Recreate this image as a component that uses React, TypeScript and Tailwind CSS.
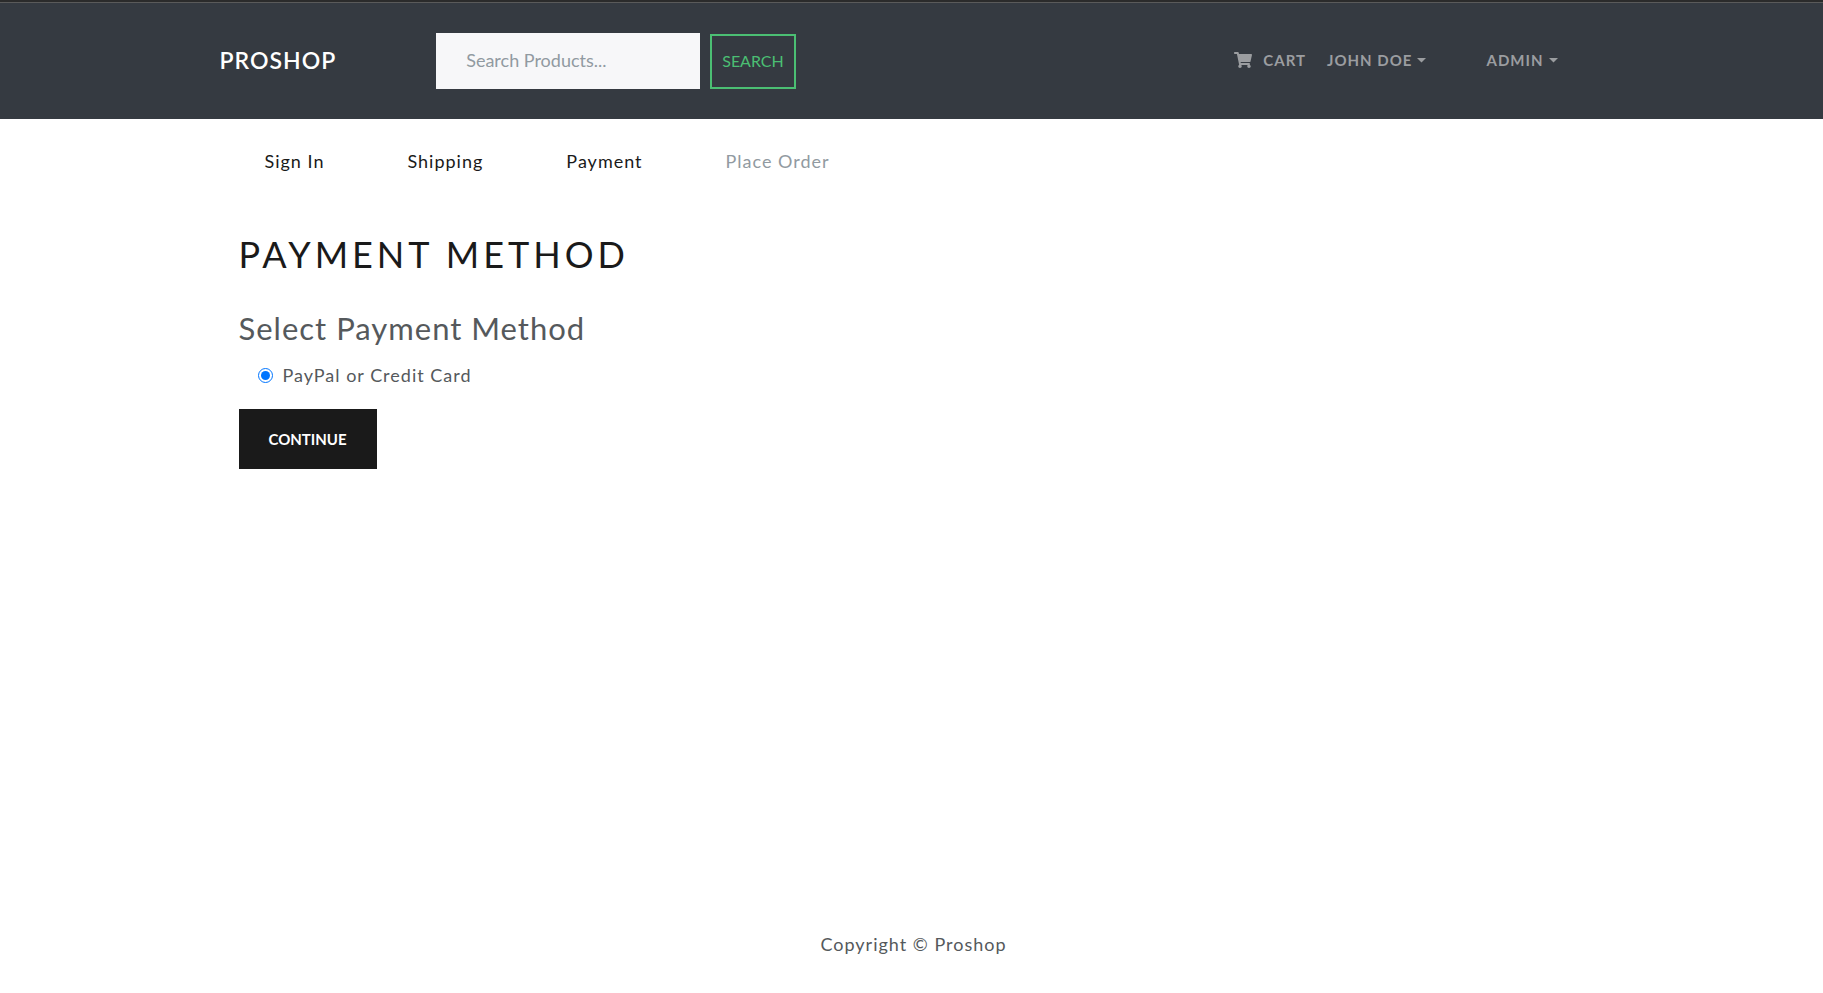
import { FaShoppingCart } from 'react-icons/fa';

const steps = [
  { label: 'Sign In', done: true },
  { label: 'Shipping', done: true },
  { label: 'Payment', done: true },
  { label: 'Place Order', done: false },
];

function Caret() {
  return (
    <svg viewBox="0 0 9 5" className="h-[5px] w-[9px] fill-current" aria-hidden="true">
      <path d="M0 0h9L4.5 4.5z" />
    </svg>
  );
}

function Header() {
  return (
    <header className="border-t-2 border-[#2b2b2b] bg-[#353a41]">
      <div className="border-t border-[#5a5a5a]">
        <nav className="mx-auto flex h-[116px] max-w-[1384px] items-center">
          <a href="#home" className="pb-[2px] text-[23px] font-semibold tracking-[1px] text-white">PROSHOP</a>
          <form className="ml-[100px] flex items-center gap-[10px]" onSubmit={(e) => e.preventDefault()}>
            <input
              type="text"
              aria-label="Search products"
              placeholder="Search Products..."
              className="h-14 w-[264px] bg-[#f7f7f9] px-[30px] pb-[2px] text-[18px] tracking-normal text-[#55595c] outline-none placeholder:text-[#919aa1]"
            />
            <button type="submit" className="mt-px h-[55px] border-2 border-[#4bbf73] px-[10px] pb-[2px] text-[16px] tracking-normal text-[#4bbf73]">
              SEARCH
            </button>
          </form>
          <div className="ml-auto flex items-center pr-[46px] pb-[2px] text-[15px] font-bold tracking-[1px] text-[#9b9da0]">
            <a href="#cart" className="flex items-center gap-[11px]">
              <FaShoppingCart className="size-[18px]" />
              CART
            </a>
            <button type="button" className="ml-[21px] flex items-center gap-[5px] tracking-[1px]">JOHN DOE<Caret /></button>
            <button type="button" className="ml-[60px] flex items-center gap-[5px] tracking-[1px]">ADMIN<Caret /></button>
          </div>
        </nav>
      </div>
    </header>
  );
}

export default function App() {
  return (
    <div className="flex min-h-screen flex-col bg-white font-[Lato,sans-serif] text-[18px] leading-7 tracking-[1px] text-[#55595c]">
      <Header />
      <main className="mx-auto w-full max-w-[1346px] grow">
        <nav aria-label="Checkout steps" className="mt-7 ml-[26px] flex gap-[83px]">
          {steps.map((s) =>
            s.done ? (
              <a key={s.label} href="#step" className="text-[#1a1a1a]">{s.label}</a>
            ) : (
              <span key={s.label} className="text-[#919aa1]">{s.label}</span>
            ),
          )}
        </nav>
        <h1 className="mt-[57px] text-[36px] leading-[44px] tracking-[4px] text-[#1a1a1a]">PAYMENT METHOD</h1>
        <form className="mt-8" onSubmit={(e) => e.preventDefault()}>
          <fieldset>
            <legend className="text-[31px] leading-10">Select Payment Method</legend>
            <label className="mt-[13px] ml-[19px] flex items-center gap-[10px]">
              <input type="radio" name="method" defaultChecked className="size-[15px] accent-[#0075ff]" />
              PayPal or Credit Card
            </label>
          </fieldset>
          <button type="submit" className="mt-5 h-[60px] bg-[#1a1a1a] px-[30px] text-[15px] font-bold tracking-normal text-white">
            CONTINUE
          </button>
        </form>
      </main>
      <footer className="pb-[35px] pl-1 text-center">Copyright © Proshop</footer>
    </div>
  );
}
